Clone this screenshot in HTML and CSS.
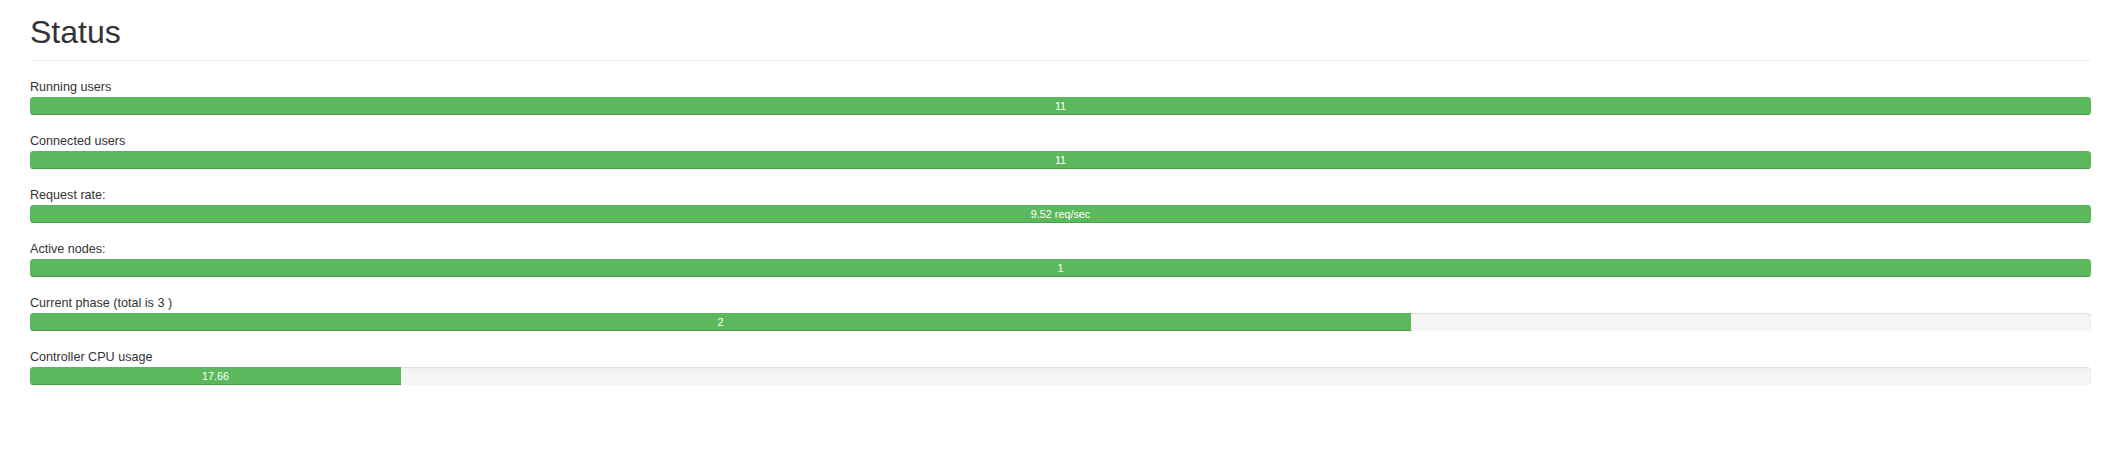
FILE: index.html
```html
<!DOCTYPE html>
<html>
<head>
<meta charset="utf-8">
<title>Status</title>
<link rel="stylesheet" href="styles.css">
</head>
<body>
<div class="container">
  <h1 class="page-header">Status</h1>
  <div class="stat">
    <div class="stat-label">Running users</div>
    <div class="progress"><div class="progress-bar" style="width:100%">11</div></div>
  </div>
  <div class="stat">
    <div class="stat-label">Connected users</div>
    <div class="progress"><div class="progress-bar" style="width:100%">11</div></div>
  </div>
  <div class="stat">
    <div class="stat-label">Request rate:</div>
    <div class="progress"><div class="progress-bar" style="width:100%">9.52 req/sec</div></div>
  </div>
  <div class="stat">
    <div class="stat-label">Active nodes:</div>
    <div class="progress"><div class="progress-bar" style="width:100%">1</div></div>
  </div>
  <div class="stat">
    <div class="stat-label">Current phase (total is 3 )</div>
    <div class="progress"><div class="progress-bar" style="width:67%">2</div></div>
  </div>
  <div class="stat">
    <div class="stat-label">Controller CPU usage</div>
    <div class="progress"><div class="progress-bar" style="width:18%">17.66</div></div>
  </div>
</div>
</body>
</html>
```

FILE: styles.css
```css
* { box-sizing: border-box; }
html, body { margin: 0; padding: 0; background: #fff; }
body {
  font-family: "Liberation Sans", Arial, Helvetica, sans-serif;
  font-size: 12.6px;
  color: #333;
}
.container {
  padding: 0 22px 0 30px;
}
.page-header {
  font-size: 32px;
  font-weight: 500;
  line-height: 35px;
  margin: 15px 0 17px 0;
  padding-bottom: 10px;
  border-bottom: 1px solid #eee;
  color: #333;
}
.stat {
  margin-bottom: 17px;
}
.stat-label {
  line-height: 18px;
  margin-bottom: 1px;
}
.progress {
  display: flex;
  height: 18px;
  background: #f5f5f5;
  border-radius: 3.6px;
  box-shadow: inset 0 1px 2px rgba(0,0,0,.1);
  overflow: hidden;
}
.progress-bar {
  height: 100%;
  background: #5cb85c;
  color: #fff;
  font-size: 10.8px;
  line-height: 18px;
  text-align: center;
  box-shadow: inset 0 -1px 0 rgba(0,0,0,.15);
}
```
